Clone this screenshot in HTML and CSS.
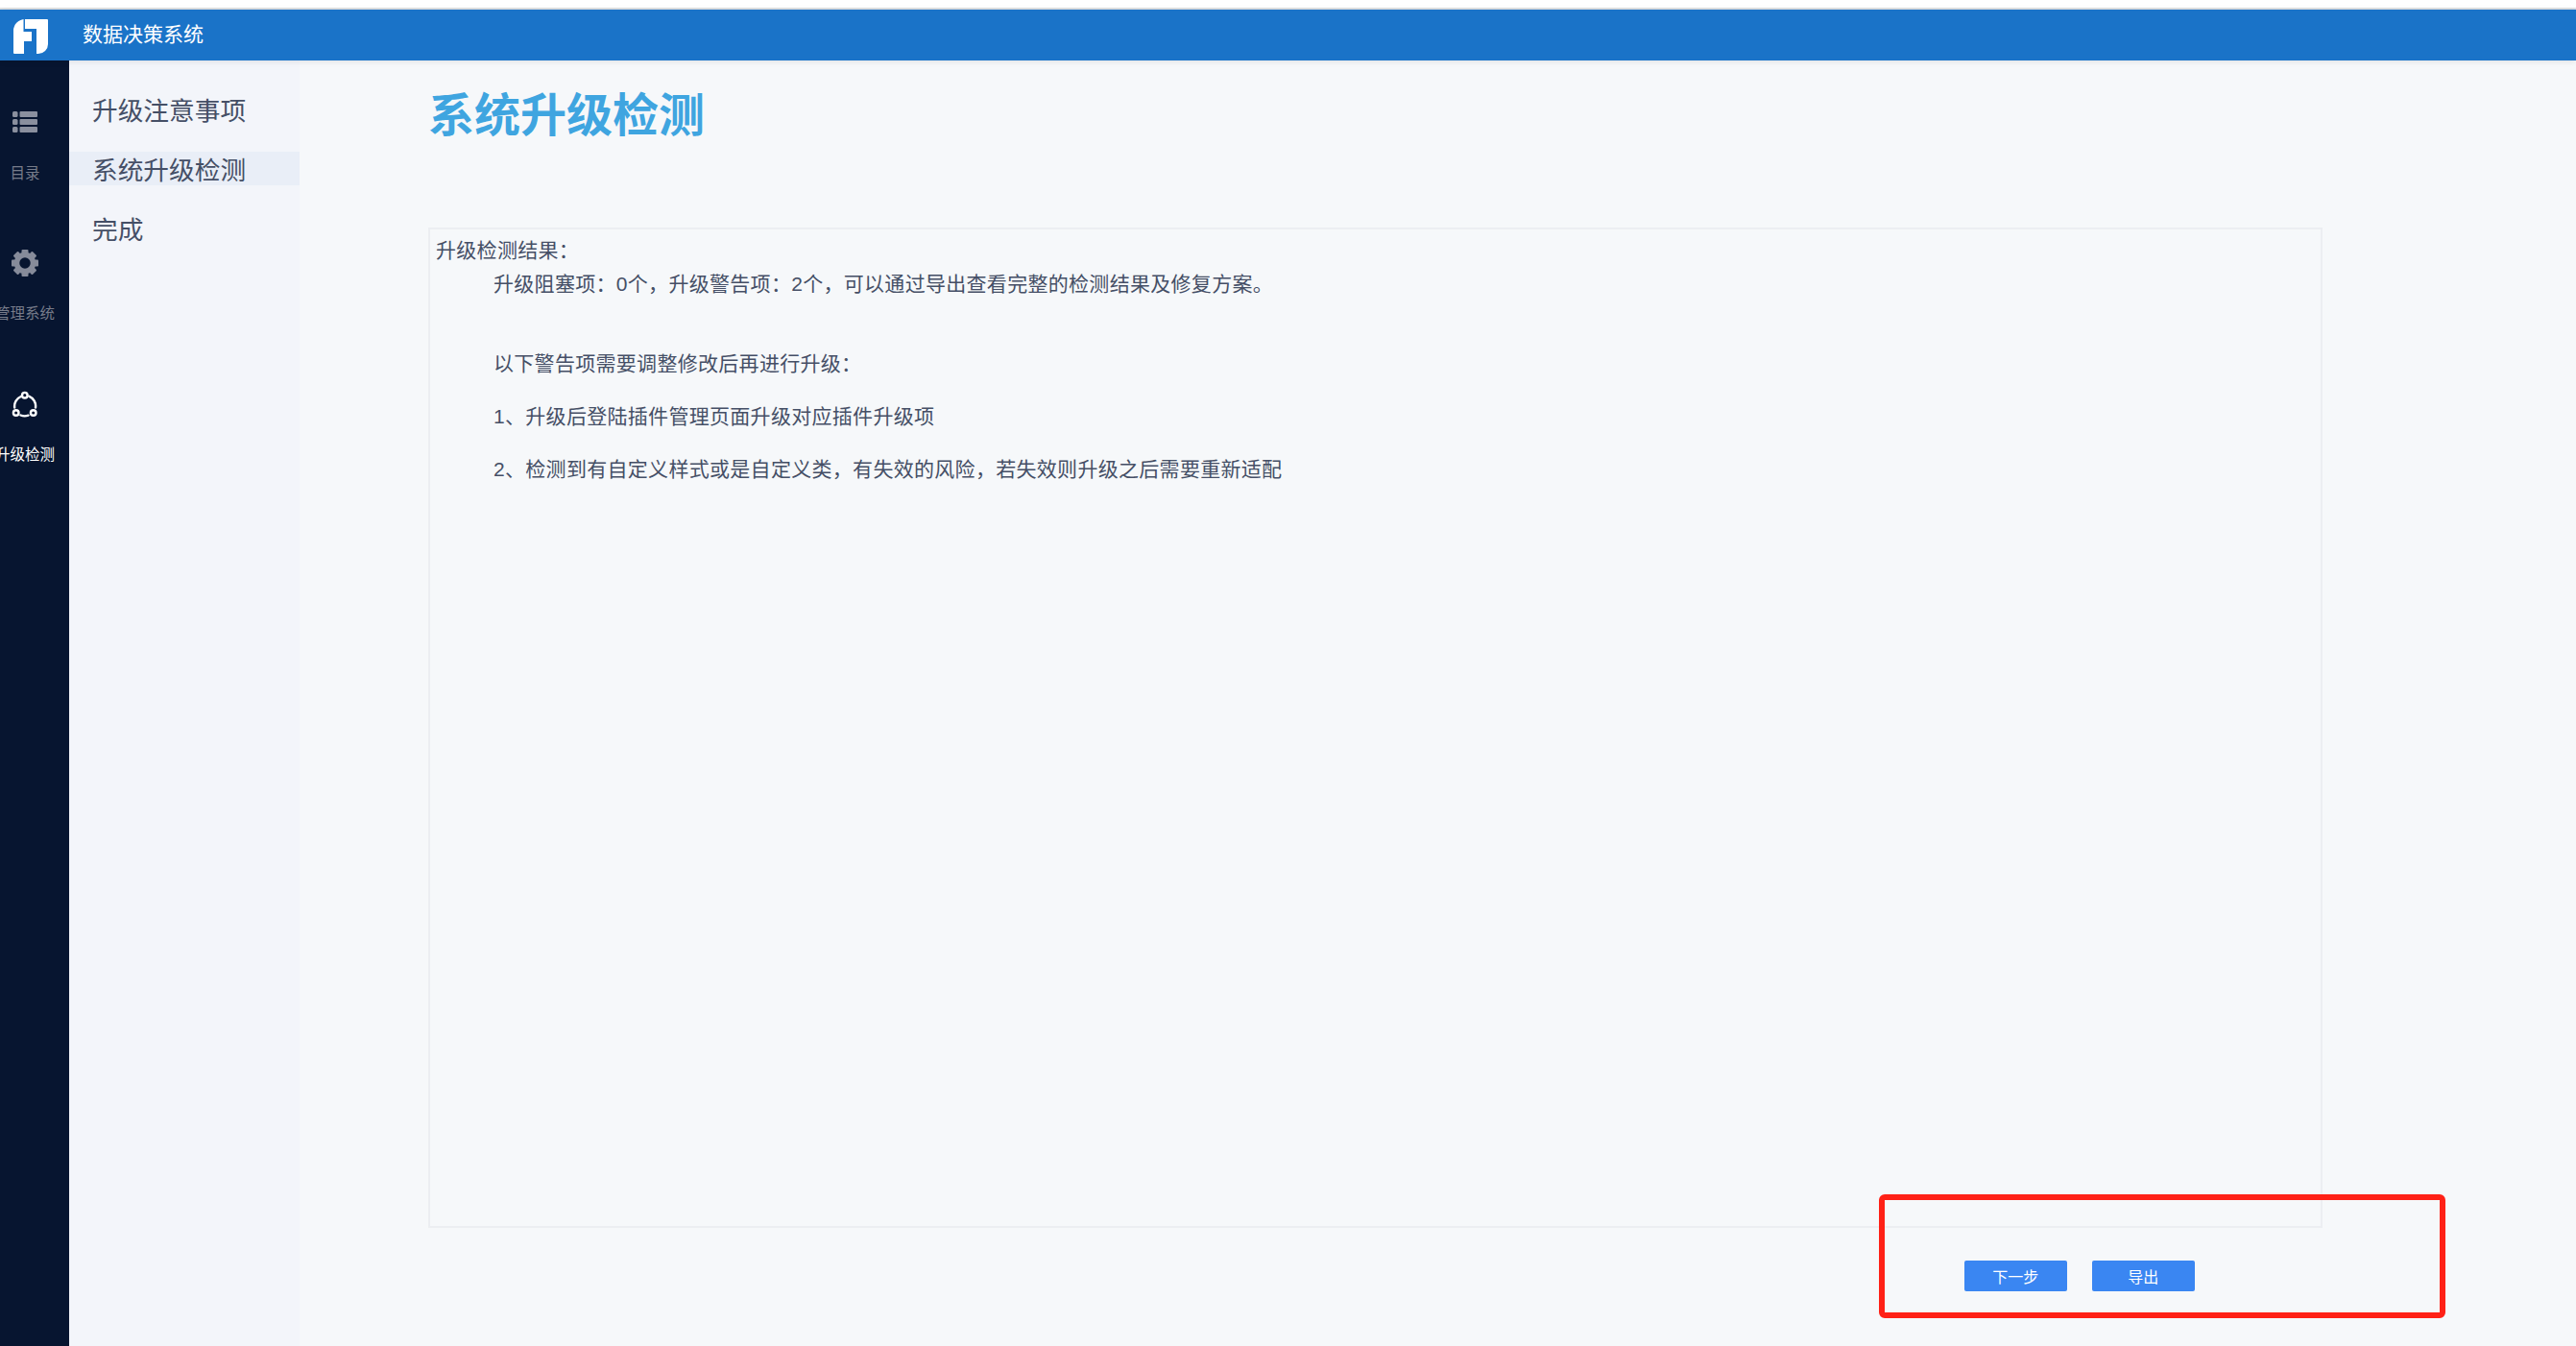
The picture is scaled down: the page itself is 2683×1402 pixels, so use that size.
FILE: index.html
```html
<!DOCTYPE html>
<html lang="zh-CN">
<head>
<meta charset="utf-8">
<title>数据决策系统</title>
<link rel="stylesheet" href="styles.css">
</head>
<body>
<div class="top-strip"></div>
<header class="header">
  <svg class="logo" viewBox="0 0 36 36" width="36" height="36"><path fill="#fff" fill-rule="evenodd" d="M12 0H35a1 1 0 0 1 1 1V26a10 10 0 0 1-10 10H1a1 1 0 0 1-1-1V12A12 12 0 0 1 12 0ZM10.500 0V13H19V23H11V36H24V10H12V0Z"/></svg>
  <span class="brand">数据决策系统</span>
</header>
<div class="body">
  <nav class="nav">
    <div class="nav-item">
      <svg class="nav-icon" viewBox="0 0 26 22" width="26" height="22"><g fill="#8a8f9e"><rect x="0" y="0" width="5.500" height="6" rx="1.500"/><rect x="7.500" y="0" width="18.500" height="6" rx="1"/><rect x="0" y="8" width="5.500" height="6" rx="1.500"/><rect x="7.500" y="8" width="18.500" height="6" rx="1"/><rect x="0" y="16" width="5.500" height="6" rx="1.500"/><rect x="7.500" y="16" width="18.500" height="6" rx="1"/></g></svg>
      <span class="nav-label nav-label-first">目录</span>
    </div>
    <div class="nav-item">
      <svg class="nav-icon" viewBox="0 0 28 28" width="28" height="28"><g fill="#868b9a"><rect x="10.500" y="0" width="7" height="5" rx="1"/><rect x="10.500" y="0" width="7" height="5" rx="1" transform="rotate(45 14 14)"/><rect x="10.500" y="0" width="7" height="5" rx="1" transform="rotate(90 14 14)"/><rect x="10.500" y="0" width="7" height="5" rx="1" transform="rotate(135 14 14)"/><rect x="10.500" y="0" width="7" height="5" rx="1" transform="rotate(180 14 14)"/><rect x="10.500" y="0" width="7" height="5" rx="1" transform="rotate(225 14 14)"/><rect x="10.500" y="0" width="7" height="5" rx="1" transform="rotate(270 14 14)"/><rect x="10.500" y="0" width="7" height="5" rx="1" transform="rotate(315 14 14)"/></g><circle cx="14" cy="14" r="8.500" fill="none" stroke="#868b9a" stroke-width="5.500"/></svg>
      <span class="nav-label">管理系统</span>
    </div>
    <div class="nav-item nav-active">
      <svg class="nav-icon" viewBox="0 0 28 28" width="28" height="28"><g fill="none" stroke="#fff" stroke-width="2.400"><circle cx="13.800" cy="4.700" r="2.800"/><circle cx="4.700" cy="23" r="2.800"/><circle cx="22.700" cy="23" r="2.800"/><path stroke-linecap="round" d="M9.800 6A11 11 0 0 0 3.200 17.500M18.500 5.800A11 11 0 0 1 25 17.500M9.500 25.500A11 11 0 0 0 17.500 25.700"/></g></svg>
      <span class="nav-label">升级检测</span>
    </div>
  </nav>
  <aside class="menu">
    <div class="menu-item">升级注意事项</div>
    <div class="menu-item menu-current">系统升级检测</div>
    <div class="menu-item">完成</div>
  </aside>
  <main class="main">
    <h1 class="title">系统升级检测</h1>
    <section class="panel">
      <p class="lead">升级检测结果&#xFF1A;</p>
      <p class="line summary">升级阻塞项&#xFF1A;0个&#xFF0C;升级警告项&#xFF1A;2个&#xFF0C;可以通过导出查看完整的检测结果及修复方案。</p>
      <p class="line warn-head">以下警告项需要调整修改后再进行升级&#xFF1A;</p>
      <p class="line item">1、升级后登陆插件管理页面升级对应插件升级项</p>
      <p class="line item">2、检测到有自定义样式或是自定义类&#xFF0C;有失效的风险&#xFF0C;若失效则升级之后需要重新适配</p>
    </section>
    <div class="actions">
      <button class="btn" type="button">下一步</button>
      <button class="btn" type="button">导出</button>
    </div>
  </main>
</div>
<div class="annotation"></div>
</body>
</html>
```
FILE: styles.css
```css
* { box-sizing: border-box; }
html, body { margin: 0; height: 100%; }
body {
  width: 2683px;
  height: 1402px;
  overflow: hidden;
  position: relative;
  display: flex;
  flex-direction: column;
  background: #f6f8fa;
  font-family: "Liberation Sans", "Noto Sans CJK SC", sans-serif;
  color: #454f66;
}
.top-strip {
  height: 10px;
  background: #fff;
  border-bottom: 2px solid #dfe1e3;
  flex: none;
}
.header {
  height: 53px;
  flex: none;
  display: flex;
  align-items: center;
  background: #1a73c8;
  padding-left: 14px;
  position: relative;
  box-shadow: 0 1px 6px rgba(0, 0, 0, .1);
}
.logo { flex: none; margin-top: 3px; }
.brand {
  margin-left: 36px;
  margin-bottom: 6px;
  color: #fff;
  font-size: 21px;
}
.body { flex: 1; display: flex; min-height: 0; }
.nav {
  width: 72px;
  flex: none;
  background: #071530;
  display: flex;
  flex-direction: column;
  overflow: hidden;
  padding-top: 50px;
}
.nav-item {
  height: 147px;
  display: flex;
  flex-direction: column;
  align-items: center;
  width: 52px;
  color: #777c8a;
}
.nav-icon { flex: none; height: 28px; }
.nav-label {
  margin-top: 28px;
  font-size: 15.500px;
  line-height: 22px;
  white-space: nowrap;
}
.nav-label-first { margin-top: 29px; }
.nav-active { color: #fff; }
.menu {
  width: 240px;
  flex: none;
  background: #f3f5fa;
  padding-top: 33px;
}
.menu-item {
  height: 35px;
  margin-bottom: 27px;
  padding-left: 24px;
  font-size: 26.700px;
  line-height: 41px;
  white-space: nowrap;
}
.menu-current { background: #e9eef7; }
.main {
  flex: 1;
  min-width: 0;
  padding: 23px 0 0 134px;
}
.title {
  margin: 0;
  height: 70px;
  color: #3fa5e0;
  font-size: 48px;
  font-weight: 700;
  line-height: 70px;
}
.panel {
  margin-top: 81px;
  width: 1973px;
  height: 1042px;
  border: 2px solid #eceef2;
  padding: 7px 6px;
  font-size: 21px;
  line-height: 30px;
  letter-spacing: .3px;
}
.panel p { margin: 0; white-space: nowrap; }
.panel .line { padding-left: 60px; }
.panel .summary { margin-top: 5px; }
.panel .warn-head { margin-top: 53px; }
.panel .item { margin-top: 25px; }
.actions {
  display: flex;
  gap: 26.500px;
  margin-top: 34px;
  padding-left: 1600px;
}
.btn {
  width: 106.500px;
  height: 32px;
  padding: 0;
  border: 0;
  border-radius: 2px;
  background: #3a86f2;
  color: #fff;
  font: 16px "Liberation Sans", "Noto Sans CJK SC", sans-serif;
}
.annotation {
  position: absolute;
  left: 1957px;
  top: 1244px;
  width: 590px;
  height: 129px;
  border: 6px solid #ff2116;
  border-radius: 6px;
}
```
